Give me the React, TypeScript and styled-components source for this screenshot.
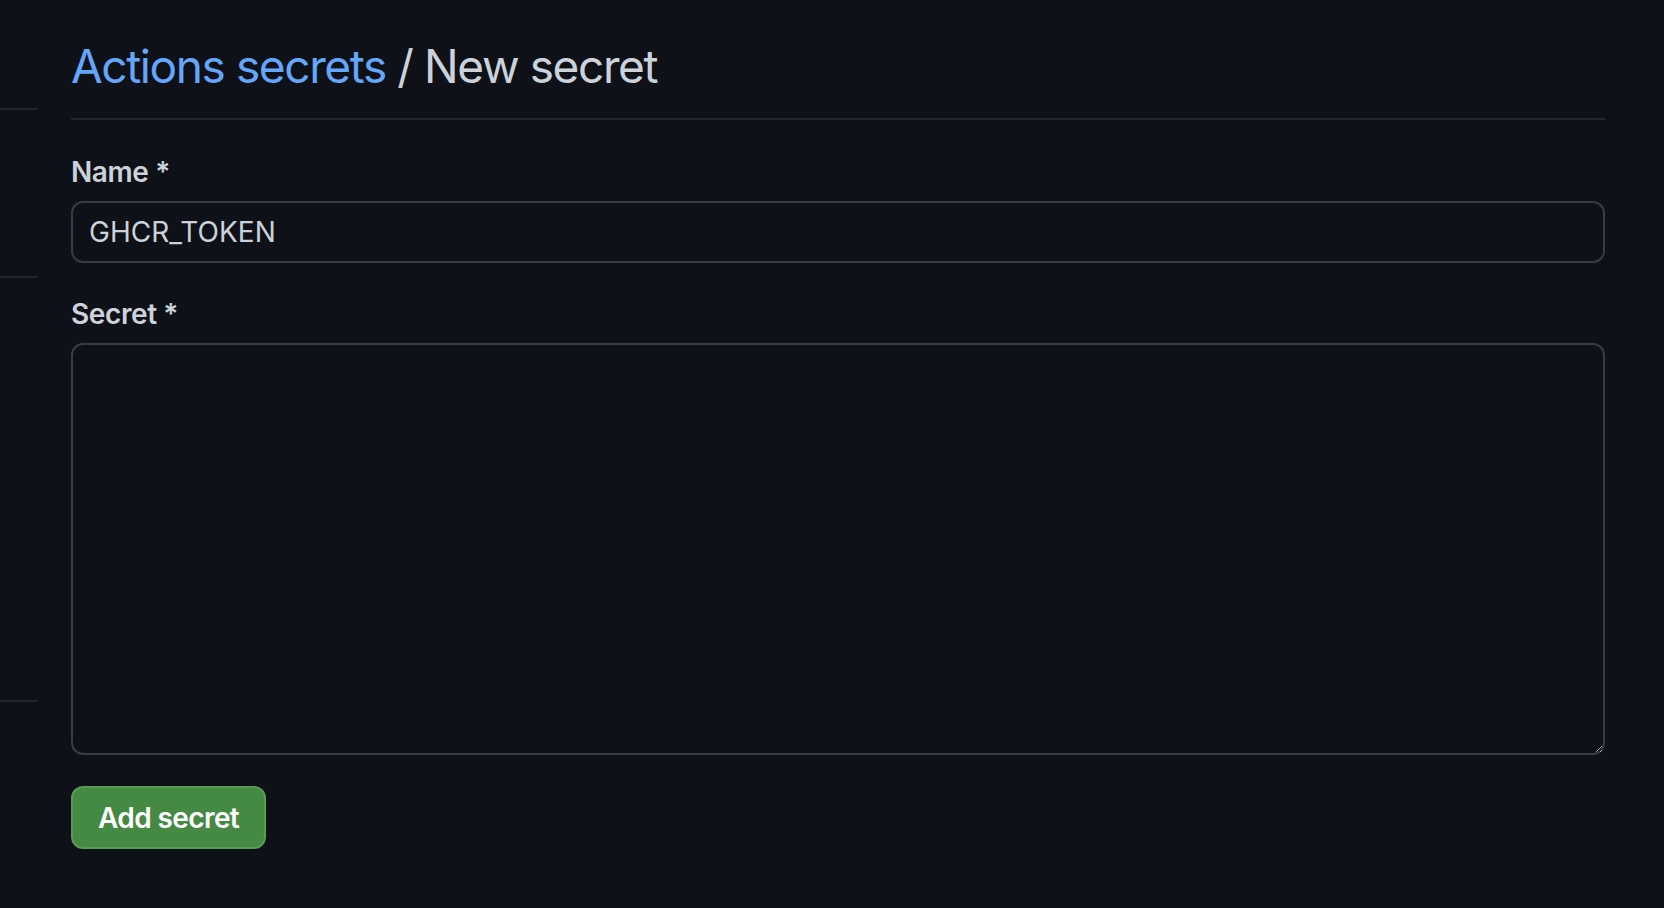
import * as React from 'react'
import styled, { createGlobalStyle } from 'styled-components'

const GlobalStyle = createGlobalStyle`
  html, body {
    margin: 0;
    padding: 0;
    background: #0e1117;
  }
  body {
    font-family: Inter, "Noto Sans", "Liberation Sans", sans-serif;
    color: #ccd2d9;
    color-scheme: dark;
  }
`

const Page = styled.div`
  min-height: 908px;
  display: flex;
  flex-flow: row nowrap;
  background: #0e1117;
`

const Sidebar = styled.nav`
  width: 38px;
  flex: none;
  display: flex;
  flex-flow: column nowrap;
`

const SideSection = styled.div<{ $height: number }>`
  height: ${({ $height }) => $height}px;
  border-bottom: 2px solid #21262d;
  box-sizing: border-box;
`

const Main = styled.main`
  flex: 1;
  display: flex;
  flex-flow: column nowrap;
  margin: 0 59px 0 33px;
  padding-top: 30px;
`

const Subhead = styled.div`
  padding-bottom: 16px;
  border-bottom: 2px solid #21262d;
  margin-bottom: 32px;
`

const Heading = styled.h2`
  margin: 0;
  font-size: 46px;
  font-weight: 400;
  line-height: 72px;
  color: #ccd2d9;
  letter-spacing: -1.4px;
`

const Crumb = styled.a.attrs({ href: '#' })`
  color: #64a6f9;
  text-decoration: none;
`

const Form = styled.form`
  display: flex;
  flex-flow: column nowrap;
`

const Group = styled.div`
  display: flex;
  flex-flow: column nowrap;
  margin-bottom: 31px;
`

const Label = styled.label`
  font-size: 28px;
  font-weight: 600;
  line-height: 40px;
  color: #ccd2d9;
  margin-bottom: 9px;
  letter-spacing: -0.4px;
`

const Input = styled.input`
  box-sizing: border-box;
  height: 62px;
  padding: 0 16px;
  font-family: inherit;
  font-size: 28px;
  color: #ccd2d9;
  background: #0e1117;
  border: 2px solid #383d45;
  border-radius: 12px;
  outline: none;
`

const TextArea = styled.textarea`
  box-sizing: border-box;
  height: 412px;
  padding: 16px;
  font-family: inherit;
  font-size: 28px;
  color: #ccd2d9;
  background: #0e1117;
  border: 2px solid #383d45;
  border-radius: 12px;
  outline: none;
  resize: vertical;
`

const Button = styled.button`
  align-self: flex-start;
  box-sizing: border-box;
  height: 63px;
  padding: 0 25px;
  font-family: inherit;
  font-size: 28px;
  font-weight: 600;
  letter-spacing: -0.6px;
  color: #ffffff;
  background: #448a42;
  border: 2px solid #579b55;
  border-radius: 12px;
  cursor: pointer;
`

export default function App() {
  return (
    <>
      <GlobalStyle />
      <Page>
        <Sidebar>
          <SideSection $height={110} />
          <SideSection $height={168} />
          <SideSection $height={424} />
        </Sidebar>
        <Main>
          <Subhead>
            <Heading>
              <Crumb>Actions secrets</Crumb> / New secret
            </Heading>
          </Subhead>
          <Form onSubmit={e => e.preventDefault()}>
            <Group>
              <Label htmlFor="secret_name">Name *</Label>
              <Input id="secret_name" defaultValue="GHCR_TOKEN" />
            </Group>
            <Group>
              <Label htmlFor="secret_value">Secret *</Label>
              <TextArea id="secret_value" />
            </Group>
            <Button type="submit">Add secret</Button>
          </Form>
        </Main>
      </Page>
    </>
  )
}
